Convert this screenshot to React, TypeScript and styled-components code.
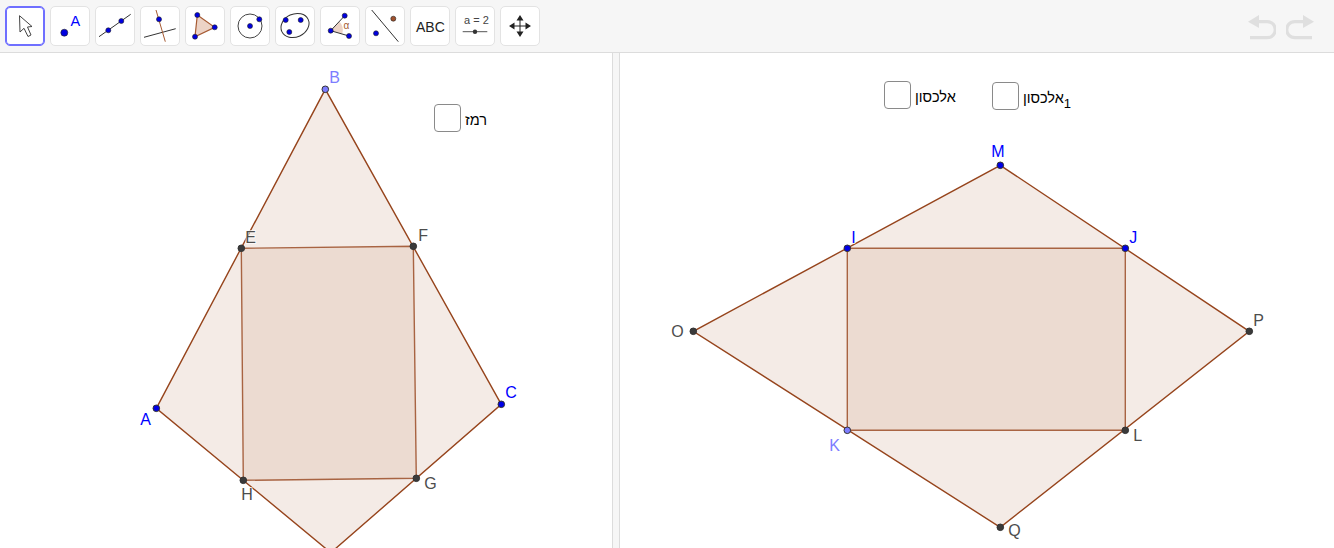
import React from 'react';
import styled, { createGlobalStyle } from 'styled-components';

const BLUE = '#0000e6';
const LINE = '#96441c';
const LIGHT = '#7d7dff';
const GREY = '#4d4d4d';
const TOOL_BLUE = '#0000e0';

const GlobalStyle = createGlobalStyle`
  html, body {
    margin: 0;
    padding: 0;
    height: 100%;
    background: #fff;
    overflow: hidden;
    font-family: "Liberation Sans", Arial, sans-serif;
  }
`;

const Page = styled.div`
  width: 1334px;
  height: 548px;
  display: flex;
  flex-direction: column;
`;

const Toolbar = styled.div`
  height: 53px;
  flex: none;
  box-sizing: border-box;
  padding: 6px 0 0 5px;
  display: flex;
  justify-content: space-between;
  background: #f6f6f6;
  border-bottom: 1px solid #dcdcdc;
`;

const ToolGroup = styled.div`
  display: flex;
  gap: 5px;
`;

const ToolButton = styled.div<{ $active?: boolean }>`
  width: 40px;
  height: 40px;
  box-sizing: border-box;
  background: #fff;
  border-radius: 5px;
  border: 1px solid ${p => (p.$active ? '#6f6fff' : '#e3e3e3')};
  box-shadow: ${p => (p.$active ? 'inset 0 0 0 1px #6f6fff' : 'none')};
`;

const UndoGroup = styled.div`
  display: flex;
  gap: 10px;
  padding: 8px 20px 0 0;
`;

const Workspace = styled.div`
  flex: 1;
  display: flex;
  min-height: 0;
`;

const Panel = styled.div<{ $width?: number }>`
  position: relative;
  flex: ${p => (p.$width ? `0 0 ${p.$width}px` : '1')};
  overflow: hidden;
  background: #fff;
`;

const Divider = styled.div`
  flex: 0 0 8px;
  box-sizing: border-box;
  background: #f6f6f6;
  border-left: 1px solid #dcdcdc;
  border-right: 1px solid #dcdcdc;
`;

const Plot = styled.svg`
  display: block;
  width: 100%;
  height: 100%;
`;

const CheckItem = styled.label<{ $x: number; $y: number }>`
  position: absolute;
  left: ${p => p.$x}px;
  top: ${p => p.$y}px;
  display: flex;
  align-items: center;
  gap: 4px;
  font-size: 14.5px;
  color: #000;
`;

const CheckBox = styled.span`
  width: 27px;
  height: 28px;
  box-sizing: border-box;
  background: #fff;
  border: 1.5px solid #8a8a8a;
  border-radius: 4px;
`;

const CheckText = styled.span`
  display: inline-flex;
  align-items: baseline;
  position: relative;
  top: 1.5px;
`;

const Sub = styled.span`
  font-size: 13px;
  line-height: 0;
  position: relative;
  top: 5px;
`;

const PointLabel = styled.text<{ $color: string }>`
  font-family: "Liberation Sans", Arial, sans-serif;
  font-size: 16px;
  fill: ${p => p.$color};
  stroke: #fff;
  stroke-width: 2px;
  stroke-opacity: 0.7;
  paint-order: stroke;
`;

const Icon = styled.svg`
  display: block;
`;

const IconText = styled.text<{ $color: string; $size: number }>`
  font-family: "Liberation Sans", Arial, sans-serif;
  font-size: ${p => p.$size}px;
  fill: ${p => p.$color};
`;

type Pt = [number, number];

const pts = (list: Pt[]) => list.map(p => p.join(',')).join(' ');

const Dot = ({ at, fill = '#3a3a3a' }: { at: Pt; fill?: string }) => (
  <circle cx={at[0]} cy={at[1]} r={3.3} fill={fill} stroke="#333" strokeWidth={1} />
);

const Figure = ({ outer, inner }: { outer: Pt[]; inner: Pt[] }) => (
  <>
    <polygon points={pts(outer)} fill="#f4ebe6" stroke={LINE} strokeWidth={1.4} />
    <polygon points={pts(inner)} fill="#ecdbd1" stroke={LINE} strokeWidth={1.4} strokeOpacity={0.8} />
  </>
);

const A: Pt = [156, 408];
const B: Pt = [325, 89];
const C: Pt = [501, 404];
const D: Pt = [330.5, 552.4];
const E: Pt = [241, 248];
const F: Pt = [413, 246];
const G: Pt = [416, 478];
const H: Pt = [243, 480];

const M: Pt = [1000, 165];
const O: Pt = [693, 331];
const P: Pt = [1249, 331];
const Q: Pt = [1000, 527];
const I: Pt = [847, 248];
const J: Pt = [1125, 248];
const K: Pt = [847, 430];
const L: Pt = [1125, 430];

const ToolDot = ({ x, y, r = 2.5, fill = TOOL_BLUE }: { x: number; y: number; r?: number; fill?: string }) => (
  <circle cx={x} cy={y} r={r} fill={fill} stroke="#222" strokeWidth={0.6} />
);

// coordinates are measured from the outer corner of the button, hence viewBox 1 1 38 38
const tools: React.ReactNode[] = [
  <path key="m" d="M14.5 9.7 L15 26 L19 22.3 L23 30.5 L26 29 L22.5 21 L27 20.5 Z" fill="#fff" stroke="#444" strokeWidth={1} strokeLinejoin="round" />,
  <g key="p">
    <ToolDot x={14.3} y={26.7} r={3.5} />
    <IconText x={20.4} y={19.7} $color="#0000ff" $size={14.5}>A</IconText>
  </g>,
  <g key="l">
    <line x1={4} y1={30.7} x2={35.7} y2={8.3} stroke="#333" strokeWidth={1} />
    <ToolDot x={13.3} y={24.3} />
    <ToolDot x={26.3} y={15} />
  </g>,
  <g key="perp">
    <line x1={4} y1={31.3} x2={35.7} y2={22.7} stroke="#333" strokeWidth={1} />
    <line x1={16} y1={4} x2={25.3} y2={35.7} stroke="#a65a32" strokeWidth={1} />
    <ToolDot x={19} y={13.3} />
  </g>,
  <g key="tri">
    <polygon points="12.3,9 29.7,21.3 10,30.7" fill="#ecd3c6" stroke="#a65a32" strokeWidth={1.2} />
    <ToolDot x={12.3} y={9} />
    <ToolDot x={29.7} y={21.3} />
    <ToolDot x={10} y={30.7} />
  </g>,
  <g key="circ">
    <circle cx={20} cy={20} r={12} fill="none" stroke="#444" strokeWidth={1} />
    <ToolDot x={20} y={20} />
    <ToolDot x={29.3} y={13.3} />
  </g>,
  <g key="con">
    <ellipse cx={20} cy={19.5} rx={14.5} ry={11.5} fill="none" stroke="#333" strokeWidth={1} transform="rotate(-25 20 19.5)" />
    <ToolDot x={10.7} y={14} />
    <ToolDot x={25.7} y={14} />
    <ToolDot x={14.3} y={26} />
  </g>,
  <g key="ang">
    <path d="M10.7 24.7 L19.4 15.6 A12.5 12.5 0 0 1 22.3 27.8 Z" fill="#ecd3c6" />
    <path d="M10.7 24.7 L24.7 9.7 M10.7 24.7 L29 30" stroke="#333" strokeWidth={1} fill="none" />
    <IconText x={23.4} y={23} $color="#a65a32" $size={10}>α</IconText>
    <ToolDot x={24.7} y={9.7} />
    <ToolDot x={10.7} y={24.7} />
    <ToolDot x={29} y={30} />
  </g>,
  <g key="refl">
    <line x1={6.7} y1={4} x2={33.3} y2={35.7} stroke="#333" strokeWidth={1} />
    <ToolDot x={11} y={27.3} />
    <ToolDot x={28.3} y={12.7} fill="#a0522d" />
  </g>,
  <IconText key="abc" x={6} y={25.7} $color="#222" $size={14}>ABC</IconText>,
  <g key="slider">
    <IconText x={9} y={18.3} $color="#444" $size={11}>a = 2</IconText>
    <line x1={7.7} y1={25.7} x2={32.3} y2={25.7} stroke="#555" strokeWidth={1} />
    <circle cx={20} cy={25.7} r={2.2} fill="#333" />
  </g>,
  <g key="move" fill="#222" stroke="none">
    <path d="M19.5 13 H20.5 V27 H19.5 Z M13 19.5 H27 V20.5 H13 Z" />
    <path d="M20 9 L23.5 14.5 H16.5 Z M20 31 L23.5 25.5 H16.5 Z M9 20 L14.5 16.5 V23.5 Z M31 20 L25.5 16.5 V23.5 Z" />
  </g>,
];

const UndoIcon = ({ flip }: { flip?: boolean }) => (
  <Icon width={28} height={26} viewBox="0 0 28 26">
    <g transform={flip ? 'matrix(-1 0 0 1 28 0)' : undefined} fill="none" stroke="#dfdfdf" strokeWidth={3.2}>
      <path d="M10 7.7 H19 C30 7.7 30 23.7 19 23.7 H2" />
      <path d="M0 7.7 L11 1 V14 Z" fill="#dfdfdf" stroke="none" />
    </g>
  </Icon>
);

const App: React.FC = () => {
  return (
    <Page>
      <GlobalStyle />
      <Toolbar>
        <ToolGroup>
          {tools.map((t, i) => (
            <ToolButton key={i} $active={i === 0}>
              <Icon width={38} height={38} viewBox="1 1 38 38">{t}</Icon>
            </ToolButton>
          ))}
        </ToolGroup>
        <UndoGroup>
          <UndoIcon />
          <UndoIcon flip />
        </UndoGroup>
      </Toolbar>
      <Workspace>
        <Panel $width={612}>
          <Plot viewBox="-0.3 52.7 612 495">
            <Figure outer={[A, B, C, D]} inner={[E, F, G, H]} />
            <Dot at={A} fill={BLUE} />
            <Dot at={B} fill={LIGHT} />
            <Dot at={C} fill={BLUE} />
            <Dot at={E} />
            <Dot at={F} />
            <Dot at={G} />
            <Dot at={H} />
            <PointLabel x={140} y={425} $color="#0000ff">A</PointLabel>
            <PointLabel x={329} y={83} $color={LIGHT}>B</PointLabel>
            <PointLabel x={505} y={398} $color="#0000ff">C</PointLabel>
            <PointLabel x={245} y={243} $color={GREY}>E</PointLabel>
            <PointLabel x={418} y={241} $color={GREY}>F</PointLabel>
            <PointLabel x={424} y={489} $color={GREY}>G</PointLabel>
            <PointLabel x={241} y={500} $color={GREY}>H</PointLabel>
          </Plot>
          <CheckItem $x={434} $y={51}>
            <CheckBox />
            <CheckText>רמז</CheckText>
          </CheckItem>
        </Panel>
        <Divider />
        <Panel>
          <Plot viewBox="619.7 52.7 714 495">
            <Figure outer={[M, P, Q, O]} inner={[I, J, L, K]} />
            <Dot at={M} fill={BLUE} />
            <Dot at={O} />
            <Dot at={P} />
            <Dot at={Q} />
            <Dot at={I} fill={BLUE} />
            <Dot at={J} fill={BLUE} />
            <Dot at={K} fill={LIGHT} />
            <Dot at={L} />
            <PointLabel x={991} y={157} $color="#0000ff">M</PointLabel>
            <PointLabel x={671} y={337} $color={GREY}>O</PointLabel>
            <PointLabel x={1253} y={326} $color={GREY}>P</PointLabel>
            <PointLabel x={1008} y={536} $color={GREY}>Q</PointLabel>
            <PointLabel x={851} y={243} $color="#0000ff">I</PointLabel>
            <PointLabel x={1129} y={243} $color="#0000ff">J</PointLabel>
            <PointLabel x={829} y={451} $color={LIGHT}>K</PointLabel>
            <PointLabel x={1133} y={441} $color={GREY}>L</PointLabel>
          </Plot>
          <CheckItem $x={264} $y={28}>
            <CheckBox />
            <CheckText>אלכסון</CheckText>
          </CheckItem>
          <CheckItem $x={372} $y={29}>
            <CheckBox />
            <CheckText>
              <span>אלכסון</span>
              <Sub>1</Sub>
            </CheckText>
          </CheckItem>
        </Panel>
      </Workspace>
    </Page>
  );
};

export default App;
